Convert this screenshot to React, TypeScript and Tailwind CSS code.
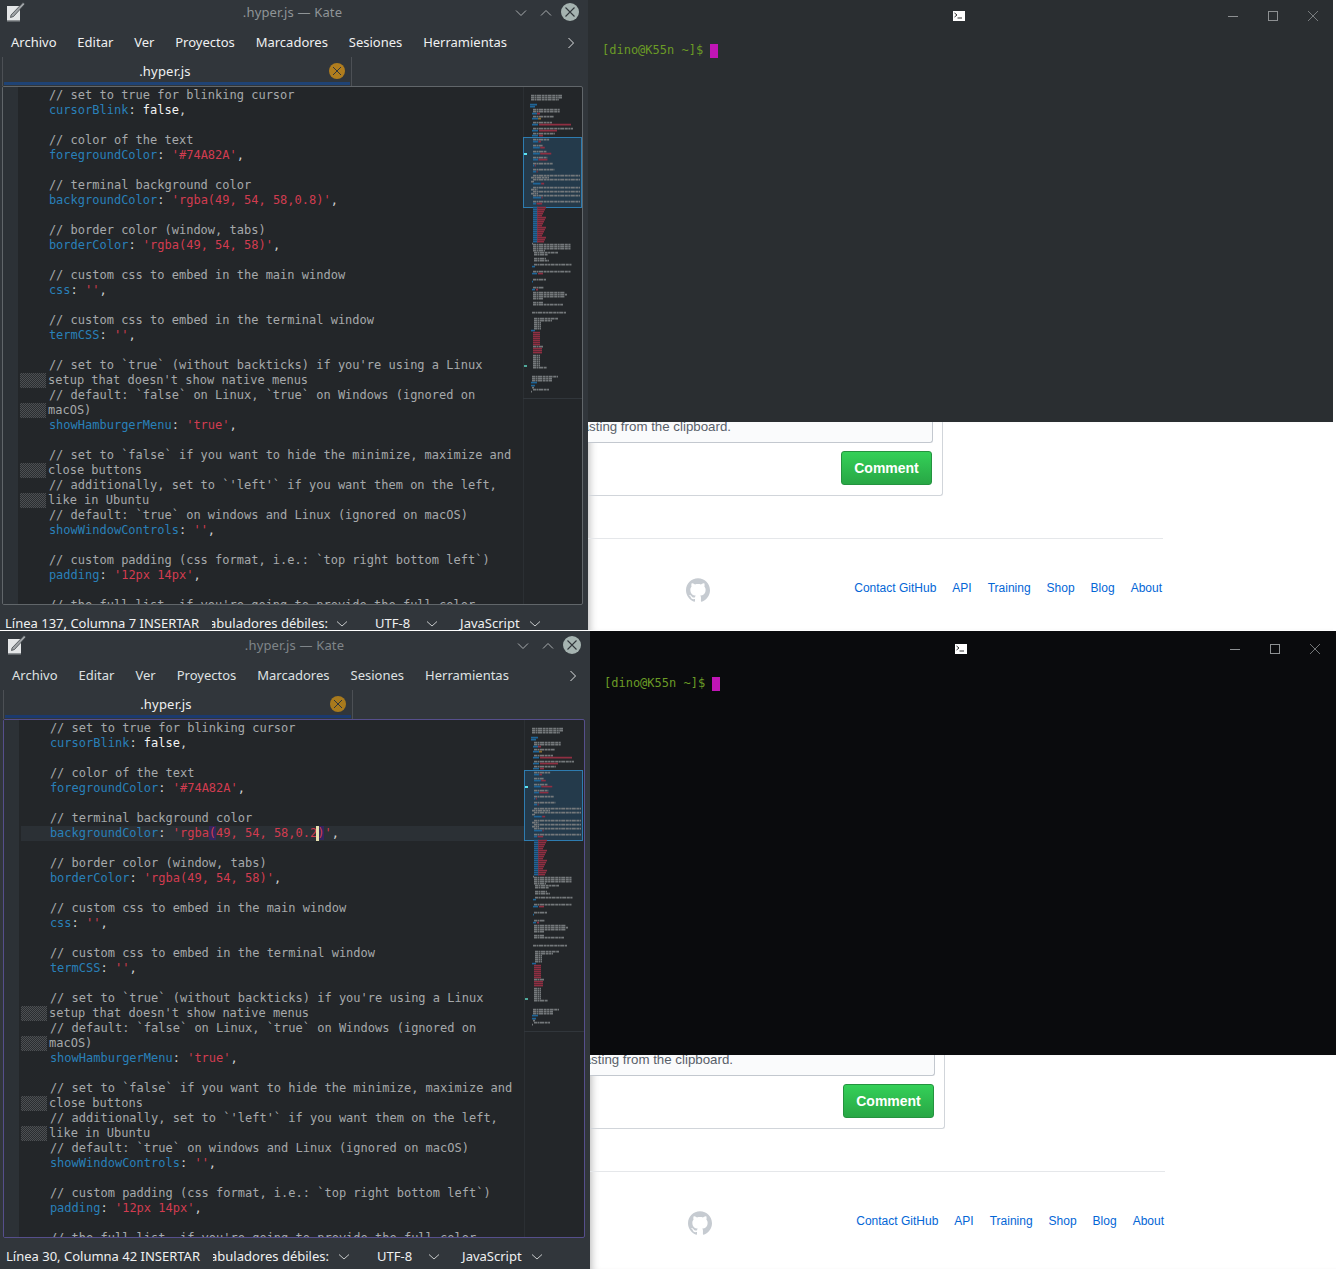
import React from "react";
import { SiGithub } from "react-icons/si";

type Line =
  | { t: "c"; s: string; w?: boolean }
  | { t: "k"; k: string; v: string; plain?: boolean; bg?: boolean }
  | { t: "b" };

const c = (s: string, w?: boolean): Line => ({ t: "c", s, w });
const k = (key: string, v: string, plain?: boolean, bg?: boolean): Line => ({ t: "k", k: key, v, plain, bg });
const b: Line = { t: "b" };

const LINES: Line[] = [
  c("// set to true for blinking cursor"),
  k("cursorBlink", "false", true),
  b,
  c("// color of the text"),
  k("foregroundColor", "'#74A82A'"),
  b,
  c("// terminal background color"),
  k("backgroundColor", "", false, true),
  b,
  c("// border color (window, tabs)"),
  k("borderColor", "'rgba(49, 54, 58)'"),
  b,
  c("// custom css to embed in the main window"),
  k("css", "''"),
  b,
  c("// custom css to embed in the terminal window"),
  k("termCSS", "''"),
  b,
  c("// set to `true` (without backticks) if you're using a Linux"),
  c("setup that doesn't show native menus", true),
  c("// default: `false` on Linux, `true` on Windows (ignored on"),
  c("macOS)", true),
  k("showHamburgerMenu", "'true'"),
  b,
  c("// set to `false` if you want to hide the minimize, maximize and"),
  c("close buttons", true),
  c("// additionally, set to `'left'` if you want them on the left,"),
  c("like in Ubuntu", true),
  c("// default: `true` on windows and Linux (ignored on macOS)"),
  k("showWindowControls", "''"),
  b,
  c("// custom padding (css format, i.e.: `top right bottom left`)"),
  k("padding", "'12px 14px'"),
  b,
  c("// the full list. if you're going to provide the full color"),
];

const GRAY = "#74787b";
const BLUE = "#1f6598";
const RED = "#8f2f42";

type Row = [number, number, number, string];

function miniRows(): Row[] {
  const rows: Row[] = [];
  const add = (y: number, x: number, w: number, col: string) => rows.push([y, x, w, col]);
  [95, 97].forEach((y) => add(y, 531, 31, GRAY));
  add(99, 531, 28, GRAY);
  add(104, 530, 7, BLUE);
  add(106, 530, 5, BLUE);
  [109, 111].forEach((y) => add(y, 533, 27, GRAY));
  add(113, 532, 5, BLUE);
  add(113, 537, 3, RED);
  add(116, 533, 21, GRAY);
  add(118, 532, 6, BLUE);
  add(118, 538, 3, "#8a6a30");
  add(122, 533, 19, GRAY);
  add(124, 532, 6, BLUE);
  add(124, 539, 32, RED);
  add(128, 533, 40, GRAY);
  add(130, 532, 6, BLUE);
  add(130, 539, 18, RED);
  add(133, 533, 22, GRAY);
  add(135, 532, 6, BLUE);
  add(135, 539, 4, RED);
  LINES.forEach((l, i) => {
    const y = 139 + 2 * i;
    if (y > 206) return;
    if (l.t === "c") {
      if (l.s.length > 50) add(y, 533, 47, GRAY);
      else if (l.w) add(y, 531, l.s.length * 0.5, GRAY);
      else add(y, 533, l.s.length * 0.48, GRAY);
    } else if (l.t === "k") {
      const kw = l.k.length * 0.45;
      add(y, 533, kw, BLUE);
      add(y, 533.5 + kw, (l.bg ? 22 : l.v.length) * 0.5, RED);
    }
  });
  for (let y = 207; y < 243; y += 2) {
    add(y, 533, 5, BLUE);
    add(y, 537, 5 + ((y * 7) % 5), RED);
  }
  add(243, 532, 1, GRAY);
  [244, 246, 248].forEach((y) => add(y, 533, 38, GRAY));
  add(250, 533, 12, GRAY);
  add(252, 534, 24, GRAY);
  add(254, 534, 14, GRAY);
  add(258, 534, 12, GRAY);
  add(260, 534, 15, GRAY);
  add(264, 534, 38, GRAY);
  add(266, 532, 3, BLUE);
  add(271, 533, 38, GRAY);
  add(273, 532, 5, BLUE);
  add(273, 538, 5, RED);
  add(279, 533, 13, GRAY);
  add(281, 532, 1, BLUE);
  add(287, 533, 11, GRAY);
  add(289, 532, 3, BLUE);
  add(289, 536, 2, RED);
  add(292, 533, 32, GRAY);
  add(294, 533, 34, GRAY);
  add(296, 533, 32, GRAY);
  add(298, 533, 10, GRAY);
  add(302, 533, 10, GRAY);
  add(304, 533, 30, GRAY);
  add(312, 532, 34, GRAY);
  add(318, 534, 24, GRAY);
  add(320, 534, 18, GRAY);
  [322, 324, 326, 328].forEach((y) => add(y, 534, 7, GRAY));
  add(330, 531, 4, BLUE);
  for (let y = 332; y < 346; y += 2) add(y, 533, 7, RED);
  add(346, 533, 10, GRAY);
  for (let y = 348; y < 354; y += 2) add(y, 533, 9, RED);
  for (let y = 355; y < 366; y += 2) add(y, 533, 7, GRAY);
  add(367, 533, 14, GRAY);
  add(376, 532, 26, GRAY);
  add(378, 532, 20, GRAY);
  add(380, 532, 20, GRAY);
  add(382, 531, 6, BLUE);
  add(385, 531, 4, BLUE);
  add(387, 532, 2, GRAY);
  add(389, 533, 16, GRAY);
  add(391, 531, 1, GRAY);
  return rows;
}

function Minimap() {
  const rows = miniRows();
  const X0 = 523;
  const Y0 = 87;
  return (
    <svg width="60" height="517" className="shrink-0 block">
      <rect x="0" y="0" width="1" height="517" fill="#2b2f33" />
      <rect x="0.5" y="50.5" width="58" height="70" fill="#243a4b" stroke="#2e7cb0" />
      <rect x="1" y="66" width="3" height="2" fill="#5fe3f0" />
      <rect x="1" y="278" width="3" height="2" fill="#4fa89a" />
      <rect x="0" y="311" width="60" height="1" fill="#31363b" />
      {rows.map((r, i) => (
        <line
          key={i}
          x1={r[1] - X0}
          x2={r[1] - X0 + r[2]}
          y1={r[0] - Y0 + 0.6}
          y2={r[0] - Y0 + 0.6}
          stroke={r[3]}
          strokeWidth="1.6"
          strokeDasharray={r[3] === GRAY ? "3 0.5 2 0.5 4 0.6" : undefined}
        />
      ))}
    </svg>
  );
}

function Chevron({ d, className }: { d: string; className?: string }) {
  return (
    <svg width="12" height="12" viewBox="0 0 12 12" fill="none" stroke="currentColor" strokeWidth="1" className={className}>
      <path d={d} />
    </svg>
  );
}

function CodeLine({ line, active }: { line: Line; active: boolean }) {
  if (line.t === "b") return <div className="h-[15px]" />;
  if (line.t === "c") {
    if (line.w) {
      return (
        <div className="h-[15px] flex">
          <span className="w-[26px] h-[15px] ml-0 mr-[2px] shrink-0 bg-[repeating-conic-gradient(#4d5053_0%_25%,#2a2d30_0%_50%)] bg-[length:2px_2px]" />
          <span className="text-[#a6a9ab]">{line.s}</span>
        </div>
      );
    }
    return <div className="h-[15px] text-[#a6a9ab]">{"    " + line.s}</div>;
  }
  if (line.bg) {
    return (
      <div className={active ? "h-[15px] bg-[#2b3035]" : "h-[15px]"}>
        <span className="text-[#2980b9]">{"    " + line.k}</span>
        <span className="text-[#cfd0d1]">: </span>
        <span className="text-[#d23c50]">'rgba</span>
        {active ? (
          <>
            <span className="text-[#d23c50] bg-[#33265e]">(</span>
            <span className="text-[#d23c50]">49, 54, 58,0.2</span>
            <span className="relative inline-block w-0 h-[15px] align-top">
              <span className="absolute left-[-1px] top-0 w-[3px] h-[15px] bg-[#e6e2b0]" />
            </span>
            <span className="text-[#d23c50] bg-[#33265e]">)</span>
          </>
        ) : (
          <span className="text-[#d23c50]">(49, 54, 58,0.8)</span>
        )}
        <span className="text-[#d23c50]">'</span>
        <span className="text-[#cfd0d1]">,</span>
      </div>
    );
  }
  return (
    <div className="h-[15px]">
      <span className="text-[#2980b9]">{"    " + line.k}</span>
      <span className="text-[#cfd0d1]">: </span>
      <span className={line.plain ? "text-[#f2f3f3]" : "text-[#d23c50]"}>{line.v}</span>
      <span className="text-[#cfd0d1]">,</span>
    </div>
  );
}

function KateIcon() {
  return (
    <svg width="22" height="22" viewBox="0 0 22 22" className="shrink-0">
      <path d="M2 5 L15 5 L15 19 L2 19 Z" fill="#e4e6e7" />
      <path d="M2 19 L15 19 L15 20.5 L2 20.5 Z" fill="#8d9194" />
      <path d="M6 14 L18 1.5 L20 3 L8.5 15.5 L5.5 16.5 Z" fill="#9fa3a6" stroke="#31363b" strokeWidth="0.7" />
    </svg>
  );
}

const MENU = ["Archivo", "Editar", "Ver", "Proyectos", "Marcadores", "Sesiones", "Herramientas"];

function Kate({ second }: { second?: boolean }) {
  return (
    <div
      className={
        second
          ? "w-[590px] h-[638px] shrink-0 pl-[1px] bg-[#31363b] overflow-hidden font-['Noto_Sans',sans-serif] text-[13px] text-[#eff0f1]"
          : "w-[588px] h-[630px] shrink-0 bg-[#31363b] overflow-hidden font-['Noto_Sans',sans-serif] text-[13px] text-[#eff0f1]"
      }
    >
      <div className={second ? "h-[30px] pt-[2px] flex items-center relative" : "h-[28px] flex items-center relative"}>
        <div className="ml-[5px] -mt-[4px]">
          <KateIcon />
        </div>
        <div className={second ? "w-[478px] pl-[55px] text-center tracking-[0.15px] text-[#7f8589] -mt-[2px]" : "w-[477px] pl-[54px] text-center tracking-[0.15px] text-[#8f9497] -mt-[2px]"}>
          .hyper.js — Kate
        </div>
        <Chevron d="M1 3.5 L6 8.5 L11 3.5" className="ml-[11px] -mt-[2px] text-[#a9adaf]" />
        <Chevron d="M1 8.5 L6 3.5 L11 8.5" className="ml-[13px] -mt-[2px] text-[#a9adaf]" />
        <svg width="18" height="18" viewBox="0 0 18 18" className="ml-[9px] -mt-[4px]">
          <circle cx="9" cy="9" r="9" fill="#a5b3b0" />
          <path d="M4.5 4.5 L13.5 13.5 M13.5 4.5 L4.5 13.5" stroke="#31363b" strokeWidth="1.1" />
        </svg>
      </div>
      <div className={second ? "h-[29px] flex items-center pl-[11px] gap-[21px] text-[#dfe1e2]" : "h-[29px] flex items-center pl-[11px] gap-[20.85px]"}>
        {MENU.map((m) => (
          <span key={m}>{m}</span>
        ))}
        <Chevron d="M3.5 1 L8.5 6 L3.5 11" className="ml-[37px] text-[#dfe1e2]" />
      </div>
      <div className="h-[29px] flex">
        <div className="w-[350px] ml-[2px] border-x border-[#4c5055] relative flex items-center justify-center">
          <span className="pr-[24px] tracking-[0.2px] text-[#eff0f1]">.hyper.js</span>
          <svg width="16" height="16" viewBox="0 0 16 16" className="absolute right-[6px] top-[6px]">
            <circle cx="8" cy="8" r="8" fill={second ? "#a87a1d" : "#b07d1e"} />
            <path d="M4 4 L12 12 M12 4 L4 12" stroke="#31363b" strokeWidth="1" />
          </svg>
          <div className={second ? "absolute left-[1px] right-[1px] bottom-[1px] h-[3px] bg-[#1b3a6e]" : "absolute left-[1px] right-[1px] bottom-[1px] h-[3px] bg-[#1f4375]"} />
        </div>
      </div>
      <div
        className={
          second
            ? "ml-[2px] w-[582px] h-[519px] border rounded-[2px] border-[#564f8c] bg-[#232629] flex overflow-hidden"
            : "ml-[2px] w-[581px] h-[519px] border rounded-[2px] border-[#61666a] bg-[#232629] flex overflow-hidden"
        }
      >
        <div className="w-[15px] shrink-0 bg-[#2c3136]" />
        <div className={second ? "w-[505px] shrink-0 pl-[2px] pt-[1px] font-['DejaVu_Sans_Mono',monospace] text-[12px] leading-[15px] whitespace-pre overflow-hidden" : "w-[505px] shrink-0 pl-[2px] pt-[1px] font-['DejaVu_Sans_Mono',monospace] text-[12px] leading-[15px] whitespace-pre overflow-hidden"}>
          {LINES.map((l, i) => (
            <CodeLine key={i} line={l} active={!!second} />
          ))}
        </div>
        <Minimap />
      </div>
      <div className="h-[27px] relative flex items-center text-[13px] text-[#eff0f1] pt-[10px]">
        <span className="ml-[5px] w-[207px] whitespace-nowrap">{second ? "Línea 30, Columna 42 INSERTAR" : "Línea 137, Columna 7 INSERTAR"}</span>
        <div className="w-[116px] overflow-hidden flex justify-end whitespace-nowrap shrink-0">
          <span>Tabuladores débiles:</span>
        </div>
        <Chevron d={"M1 3.5 L6 8 L11 3.5"} className={second ? "ml-[9px] text-[#c6c9ca]" : "ml-[8px] text-[#c6c9ca]"} />
        <span className="ml-[27px] whitespace-nowrap">UTF-8</span>
        <Chevron d="M1 3.5 L6 8 L11 3.5" className="ml-[16px] text-[#c6c9ca]" />
        <span className="ml-[22px] whitespace-nowrap">JavaScript</span>
        <Chevron d="M1 3.5 L6 8 L11 3.5" className="ml-[9px] text-[#c6c9ca]" />
      </div>
    </div>
  );
}

function Terminal({ second }: { second?: boolean }) {
  return (
    <div className={second ? "h-[424px] bg-[#0a0b0d] pt-[2px]" : "h-[422px] bg-[#2a2e31]"}>
      <div className="h-[32px] flex items-center relative">
        <svg width="12" height="10" viewBox="0 0 12 10" className="ml-[365px]">
          <rect width="12" height="10" fill="#fff" />
          <path d="M1.5 2 L4 4 L1.5 6 M4.5 7 H9" stroke="#333" strokeWidth="1" fill="none" />
        </svg>
        <svg width="10" height="1" viewBox="0 0 10 1" className="ml-[263px]">
          <rect width="10" height="1" fill="#8d9092" />
        </svg>
        <svg width="10" height="10" viewBox="0 0 10 10" className="ml-[30px]">
          <rect x="0.5" y="0.5" width="9" height="9" fill="none" stroke="#8d9092" />
        </svg>
        <svg width="10" height="10" viewBox="0 0 10 10" className="ml-[30px]">
          <path d="M0 0 L10 10 M10 0 L0 10" stroke="#8d9092" strokeWidth="0.8" />
        </svg>
      </div>
      <div className="pl-[15px] mt-[11px] flex items-center h-[15px] font-['DejaVu_Sans_Mono',monospace] text-[12px] leading-[15px] whitespace-pre text-[#6b9b26]">
        <span className="-ml-[1px]">[dino@K55n ~]$ </span>
        <span className="w-[8px] h-[14px] bg-[#c015b5]" />
      </div>
    </div>
  );
}

function Page({ second }: { second?: boolean }) {
  return (
    <div className={second ? "h-[214px] bg-white shadow-[inset_8px_0_8px_-7px_rgba(0,0,0,0.3)] font-['Liberation_Sans',sans-serif]" : "h-[208px] bg-white shadow-[inset_8px_0_8px_-7px_rgba(0,0,0,0.3)] font-['Liberation_Sans',sans-serif]"}>
      <div className="w-[355px] h-[74px] border-r border-b border-[#d1d5da] rounded-br-[3px] pr-[9px]">
        <div className="h-[21px] bg-[#fafbfc] border-r border-b border-[#c3c8cf] rounded-br-[3px] flex">
          <div className="w-[143px] overflow-hidden flex justify-end whitespace-nowrap">
            <span className="shrink-0 text-[13.3px] leading-[10px] text-[#586069]">pasting from the clipboard.</span>
          </div>
        </div>
        <div className="flex justify-end mt-[8px] pr-[1px]">
          <div className="w-[91px] h-[34px] rounded-[3px] border border-[#24933f] bg-gradient-to-b from-[#34d058] to-[#28a745] text-white font-bold text-[14px] flex items-center justify-center">
            Comment
          </div>
        </div>
      </div>
      <div className="w-[575px] mt-[42px] border-t border-[#e5e7ea] flex items-start justify-between pl-[98px] pt-[39px]">
        <SiGithub size={24} color="#c6cbd1" className="shrink-0" />
        <div className="flex gap-[16px] pr-[1px] text-[12px] text-[#0366d6] leading-[20px] whitespace-nowrap">
          {["Contact GitHub", "API", "Training", "Shop", "Blog", "About"].map((s) => (
            <span key={s}>{s}</span>
          ))}
        </div>
      </div>
    </div>
  );
}

export default function App() {
  return (
    <div className="w-[1342px] h-[1269px] bg-white overflow-hidden">
      <div className="flex h-[630px]">
        <Kate />
        <div className="w-[745px]">
          <Terminal />
          <Page />
        </div>
      </div>
      <div className="h-px w-[588px] bg-white" />
      <div className="flex h-[638px]">
        <Kate second />
        <div className="w-[746px]">
          <Terminal second />
          <Page second />
        </div>
      </div>
    </div>
  );
}
